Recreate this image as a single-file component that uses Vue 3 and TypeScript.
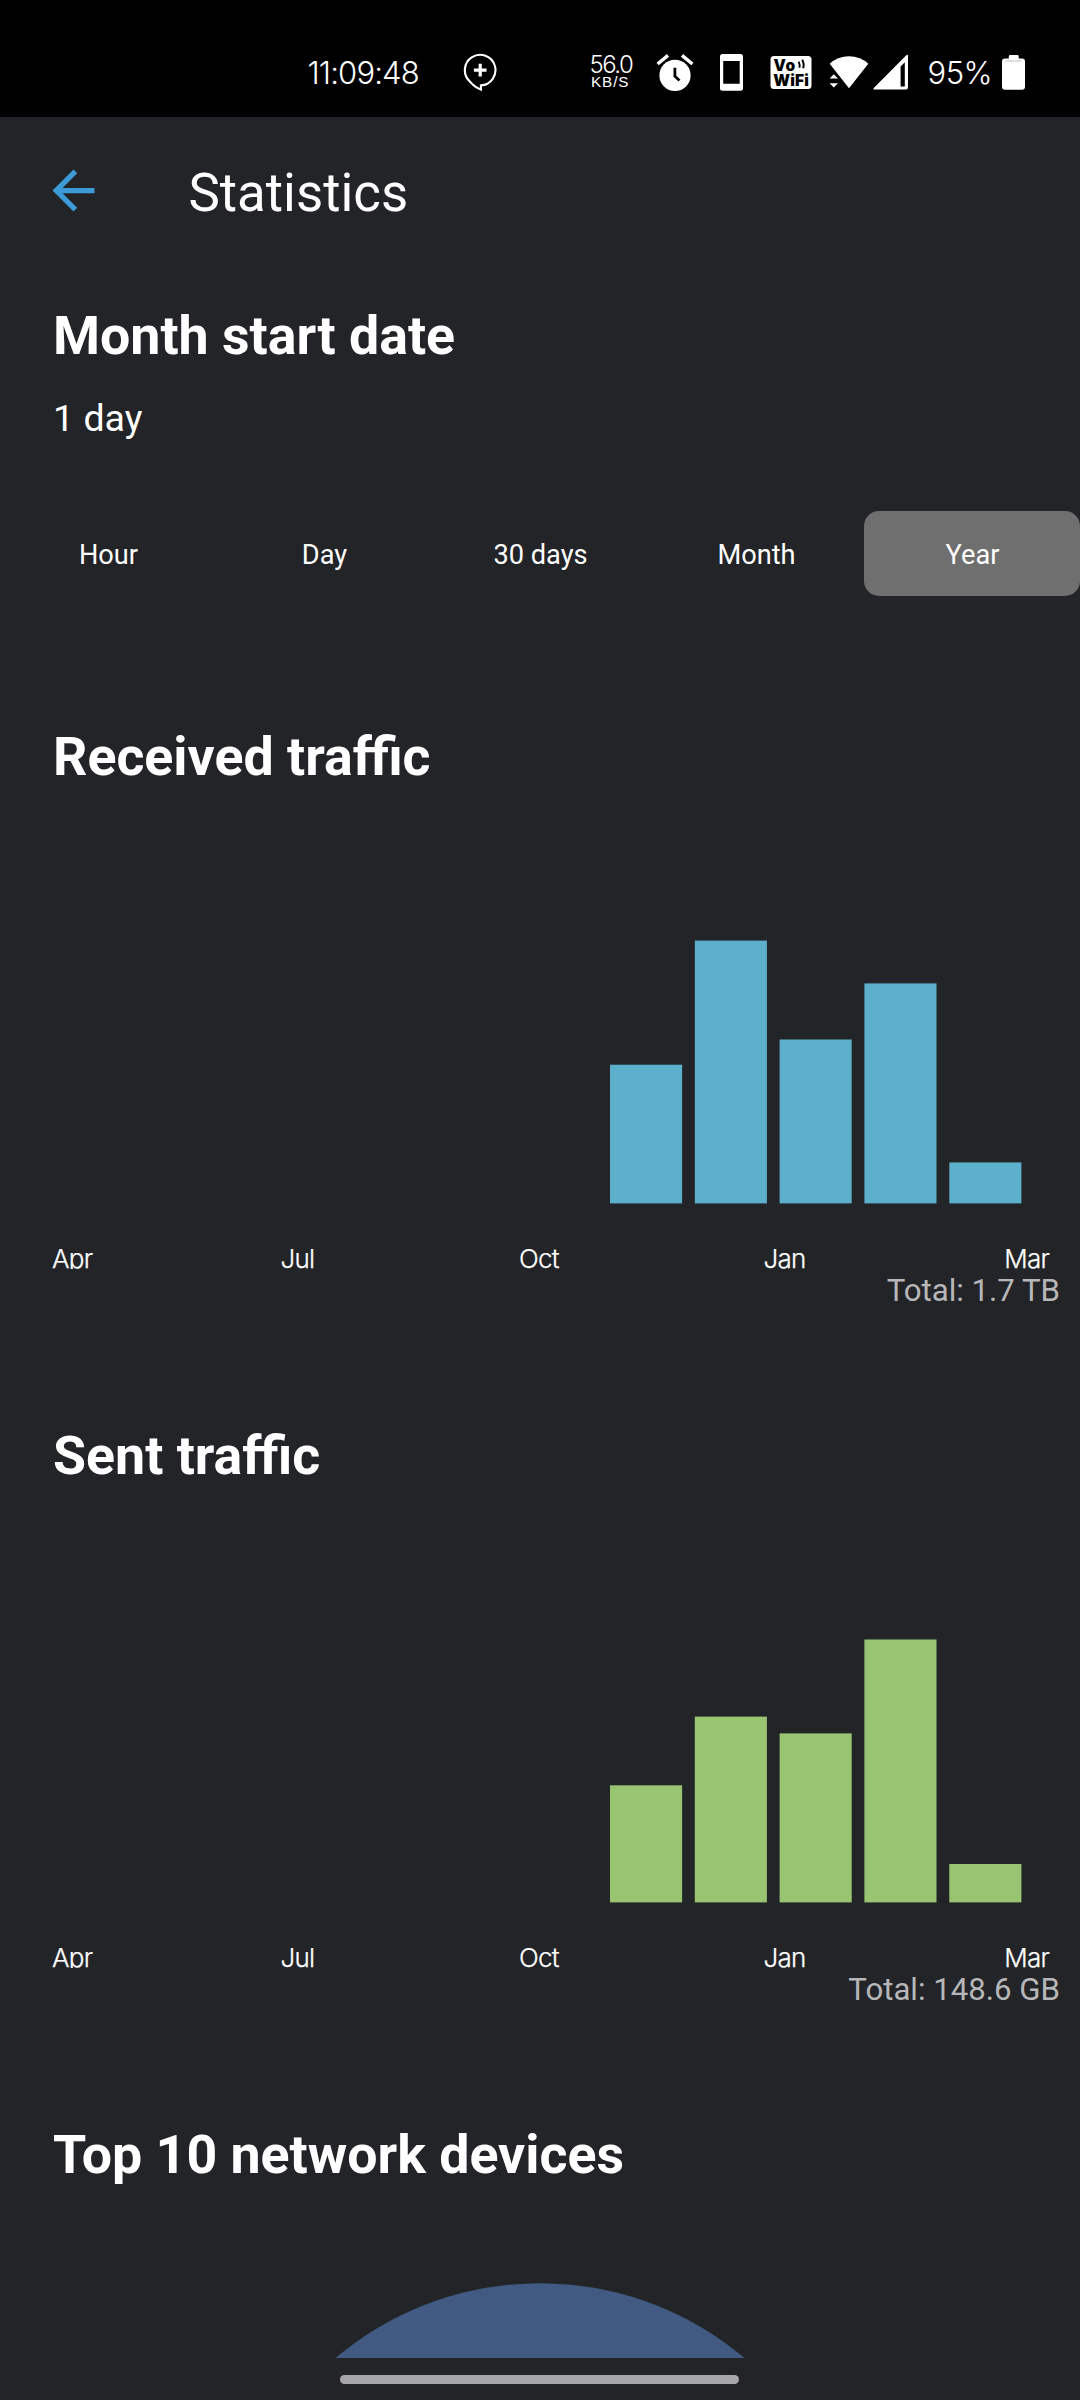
<script setup lang="ts">
interface Bar {
  x: number
  top: number
}

interface Chart {
  title: string
  color: string
  total: string
  baseline: number
  bars: Bar[]
}

const ranges: string[] = ['Hour', 'Day', '30 days', 'Month', 'Year']
const activeRange = 'Year'

const barWidth = 72.1
const columns: number[] = [610, 694.8, 779.6, 864.4, 949.3]

const toBars = (tops: number[]): Bar[] => tops.map((top, i) => ({ x: columns[i], top }))

const charts: Chart[] = [
  {
    title: 'Received traffic',
    color: '#5cb0cb',
    total: 'Total: 1.7 TB',
    baseline: 414.4,
    bars: toBars([275.7, 151.6, 250.5, 194.4, 373.4]),
  },
  {
    title: 'Sent traffic',
    color: '#99c572',
    total: 'Total: 148.6 GB',
    baseline: 414.4,
    bars: toBars([297.3, 228.6, 245.4, 151.5, 376]),
  },
]

const axis: { label: string; x: number }[] = [
  { label: 'Apr', x: 52 },
  { label: 'Jul', x: 280.4 },
  { label: 'Oct', x: 519 },
  { label: 'Jan', x: 763.4 },
  { label: 'Mar', x: 1004.2 },
]
</script>

<template>
  <div class="screen">
    <header class="status">
      <span class="clock">11:09:48</span>
      <svg class="bubble" width="36" height="40" viewBox="0 0 36 40">
        <path d="M17.9 32.4A15.3 15.3 0 1 0 6.6 28.2Q10.5 33.6 17.9 36.6Z" fill="none" stroke="#fff" stroke-width="2.1" />
        <path d="M17.2 10.8v12.6M10.9 17.1h12.6" stroke="#fff" stroke-width="3.2" />
      </svg>
      <div class="speed">
        <span class="rate">56.0</span>
        <span class="unit">KB/S</span>
      </div>
      <svg class="alarm" width="38" height="40" viewBox="0 0 38 40">
        <circle cx="19" cy="22.4" r="15.6" fill="#fff" />
        <path d="M1.6 11L12 2.4M26 2.4L36.4 11" stroke="#fff" stroke-width="3.4" />
        <path d="M18.9 14.8v8.4l4.6 4.4" fill="none" stroke="#000" stroke-width="2.8" />
      </svg>
      <svg class="phone" width="23" height="40" viewBox="0 0 23 40">
        <path fill="#fff" fill-rule="evenodd" d="M2.5 1h18Q23 1 23 3.5v31.7q0 2.5-2.5 2.5h-18Q0 37.7 0 35.2V3.5Q0 1 2.5 1zM3.2 8v22.7h16.5V8z" />
      </svg>
      <svg class="vowifi" width="42" height="40" viewBox="0 0 42 40">
        <rect x="0.5" y="3" width="41" height="33" rx="3.5" fill="#fff" />
        <text class="vo" x="3.6" y="18.2" textLength="21.5">Vo</text>
        <text class="vo" x="3.3" y="32.6" textLength="35.5">WiFi</text>
        <path d="M28.6 8.6q1.6 3 .8 6.2M32.2 6.8q2.4 4 1 8.4" fill="none" stroke="#000" stroke-width="1.9" />
      </svg>
      <svg class="wifi" width="40" height="40" viewBox="0 0 40 40">
        <path d="M0.7 10.8Q8.5 3.2 20 3.2T39.3 10.8L20 35.2Z" fill="#fff" />
        <path d="M0.6 25.4L4.8 21.2L9 25.4ZM0.6 30.2L4.8 34.6L9 30.2Z" fill="#fff" />
      </svg>
      <svg class="signal" width="36" height="40" viewBox="0 0 36 40">
        <path fill="#fff" fill-rule="evenodd" d="M0.5 35.2L33.3 2.2Q35 1.2 35 3v31q0 2.6-2 2.6H0.5ZM27.6 13.6V33.5h4.2V9.2Z" />
      </svg>
      <span class="percent">95%</span>
      <svg class="battery" width="23" height="40" viewBox="0 0 23 40">
        <path d="M6.8 5.5V3.2q0-1.2 1.2-1.2h7.5q1.2 0 1.2 1.2V5.5H20q3 0 3 3v25q0 3.2-3 3.2H3q-3 0-3-3.2v-25q0-3 3-3Z" fill="#fff" />
        <path d="M3.5 8h16" stroke="#d4d4d4" stroke-width="1.5" />
      </svg>
    </header>

    <div class="appbar">
      <svg class="back" width="63" height="63" viewBox="0 0 24 24">
        <path d="M20 11H7.83l5.59-5.59L12 4l-8 8 8 8 1.41-1.41L7.83 13H20z" fill="#3c9ad6" />
      </svg>
      <span class="title">Statistics</span>
    </div>

    <section class="start">
      <h2 class="heading">Month start date</h2>
      <div class="value">1 day</div>
    </section>

    <nav class="tabs">
      <button v-for="range in ranges" :key="range" class="tab" :class="{ active: range === activeRange }">
        {{ range }}
      </button>
    </nav>

    <section v-for="chart in charts" :key="chart.title" class="chart">
      <h2 class="heading">{{ chart.title }}</h2>
      <svg class="plot" width="1080" height="480" viewBox="0 0 1080 480">
        <rect
          v-for="bar in chart.bars"
          :key="bar.x"
          :x="bar.x"
          :y="bar.top"
          :width="barWidth"
          :height="chart.baseline - bar.top"
          :fill="chart.color"
        />
        <text v-for="tick in axis" :key="tick.label" class="tick" :x="tick.x" y="479">{{ tick.label }}</text>
      </svg>
      <div class="total">{{ chart.total }}</div>
    </section>

    <section class="devices">
      <h2 class="heading">Top 10 network devices</h2>
      <svg class="pie" width="1080" height="171" viewBox="0 0 1080 171">
        <circle cx="540" cy="412.8" r="316.6" fill="#405a81" />
      </svg>
    </section>

    <div class="homebar"></div>
  </div>
</template>

<style>
body {
  margin: 0;
  background: #232428;
}
</style>

<style scoped>
.screen {
  width: 1080px;
  height: 2400px;
  overflow: hidden;
  display: flex;
  flex-direction: column;
  background: #232428;
  color: #fff;
  font-family: Roboto, sans-serif;
}
.status {
  flex: none;
  box-sizing: border-box;
  height: 117px;
  padding-top: 53px;
  display: flex;
  align-items: flex-start;
  background: #000;
  font-family: Inter, sans-serif;
  font-weight: 300;
  white-space: nowrap;
}
.status svg {
  flex: none;
  display: block;
}
.clock {
  width: 155.5px;
  margin-left: 307.5px;
  font-size: 31px;
  line-height: 40px;
  letter-spacing: -0.85px;
}
.speed {
  width: 66px;
  margin-left: 90.5px;
  display: flex;
  flex-direction: column;
}
.rate {
  font-size: 24px;
  line-height: 24px;
  letter-spacing: -1.5px;
}
.unit {
  margin-left: 1.5px;
  font: 400 15.3px "Liberation Sans", sans-serif;
  line-height: 10px;
  letter-spacing: 0.9px;
}
.phone {
  margin-left: 26.5px;
}
.vowifi {
  margin-left: 27px;
}
.vo {
  font: 900 15.5px Inter, sans-serif;
  fill: #000;
}
.wifi {
  margin-left: 17px;
}
.signal {
  margin-left: 4px;
}
.percent {
  width: 74px;
  margin-left: 18.5px;
  font-size: 31px;
  line-height: 40px;
  letter-spacing: -0.5px;
}
.appbar {
  flex: none;
  height: 152px;
  display: flex;
  align-items: center;
}
.back {
  margin: -5px 0 0 42px;
}
.title {
  margin-left: 83.5px;
  font-size: 52.8px;
  line-height: 80px;
}
.heading {
  margin: 0 0 0 53px;
  font-size: 53.7px;
  font-weight: 700;
  line-height: 64px;
}
.start {
  flex: none;
  height: 207px;
  padding-top: 35px;
}
.value {
  margin: 28px 0 0 53px;
  font-size: 37.5px;
  line-height: 44px;
}
.tabs {
  flex: none;
  display: flex;
  height: 85px;
}
.tab {
  flex: 1;
  border: 0;
  padding: 2px 0 0 1px;
  border-radius: 15px;
  background: none;
  color: #fff;
  font: 400 27.2px Roboto, sans-serif;
}
.tab.active {
  background: #6f6f6f;
}
.chart {
  flex: none;
  height: 699px;
}
.tabs + .chart {
  margin-top: 129px;
}
.plot,
.pie {
  display: block;
  overflow: hidden;
}
.tick {
  font: 300 26px Inter, sans-serif;
  letter-spacing: -0.7px;
  fill: #fff;
  stroke: #fff;
  stroke-width: 0.25px;
}
.total {
  margin: 4px 20px 0 0;
  text-align: right;
  font-size: 31.2px;
  line-height: 36px;
  color: #b7b7b9;
}
.devices {
  flex: none;
}
.homebar {
  flex: none;
  width: 399px;
  height: 9px;
  margin: 17px 0 0 340px;
  border-radius: 5px;
  background: #a7a7a9;
}
</style>
